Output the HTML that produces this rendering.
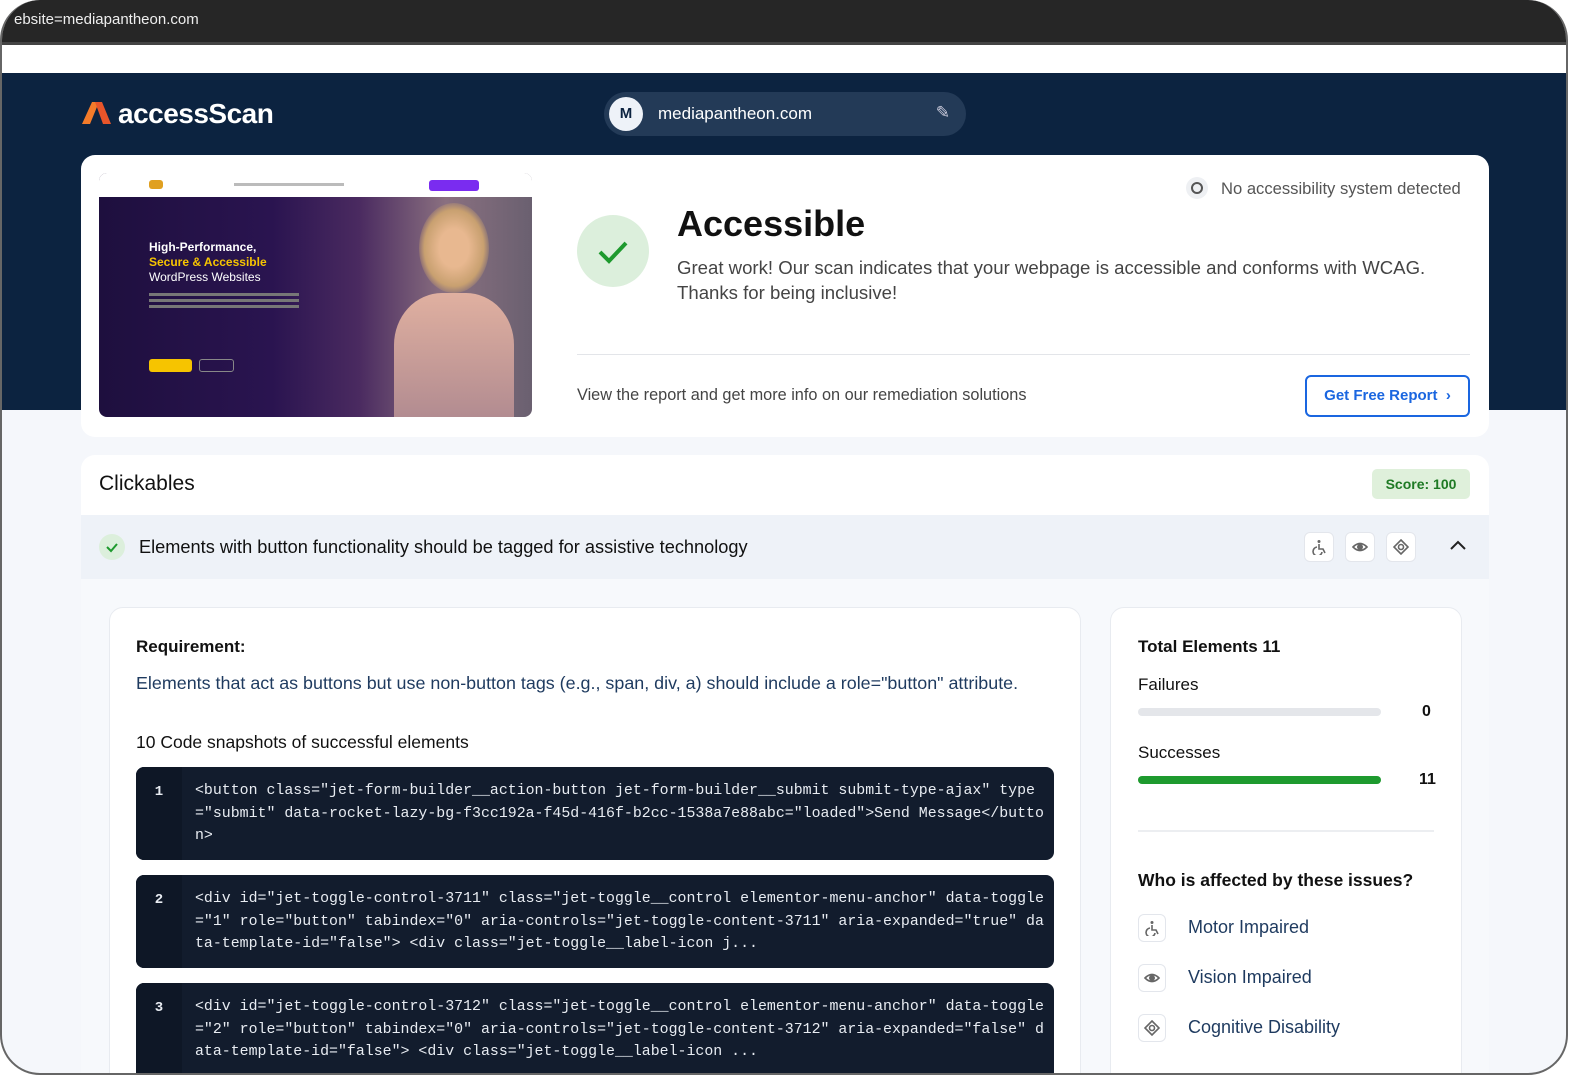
<!DOCTYPE html>
<html><head><meta charset="utf-8"><style>
*{box-sizing:border-box;margin:0;padding:0}
body{width:1576px;height:1080px;background:#fff;font-family:"Liberation Sans",sans-serif;overflow:hidden;position:relative}
.frame{position:absolute;left:0;top:0;width:1568px;height:1075px;border:2px solid #666;border-top:none;border-radius:40px;overflow:hidden;background:#f5f7fb}
.bar{position:absolute;left:0;top:0;width:100%;height:45px;background:#262626;color:#eee;font-size:15px;padding:11px 0 0 12px;border-bottom:3px solid #444}
.white{position:absolute;top:45px;left:0;width:100%;height:28px;background:#fff}
.navy{position:absolute;top:73px;left:0;width:100%;height:337px;background:#0c2340}
.logo{position:absolute;left:80px;top:98px;color:#fff;font-size:28px;font-weight:bold;letter-spacing:-0.5px}
.url{position:absolute;left:602px;top:92px;width:362px;height:44px;border-radius:22px;background:#233a57;color:#fff;font-size:17px}
.url .m{position:absolute;left:5px;top:5px;width:34px;height:34px;border-radius:50%;background:#eef2f8;color:#0c2340;font-weight:bold;text-align:center;line-height:34px;font-size:15px}
.card{position:absolute;background:#fff;border-radius:14px}
.thumb{position:absolute;left:97px;top:173px;width:433px;height:244px;border-radius:8px;overflow:hidden;background:linear-gradient(90deg,#1e0f3e 0%,#2a1450 40%,#4a2a60 60%,#8a7080 80%,#6a6070 100%)}
.h{color:#111}
.code{position:absolute;left:134px;width:918px;height:93px;background:#121c2d;border-radius:8px;color:#e8ecf2;font-family:"Liberation Mono",monospace;font-size:14.9px;line-height:22.5px}
.code .n{position:absolute;left:0;top:0;width:46px;height:100%;background:#0e1726;border-radius:8px 0 0 8px;text-align:center;padding-top:14px;font-weight:bold;font-size:14px}
.code .t{position:absolute;left:59px;top:13px;right:4px;white-space:pre;overflow:hidden}
.ib{position:absolute;width:30px;height:30px;border:1px solid #e3e6ec;border-radius:6px;background:#fff}
.ib svg{position:absolute;left:50%;top:50%;transform:translate(-50%,-50%)}
</style></head><body>
<svg width="0" height="0" style="position:absolute">
<defs>
<g id="wc" fill="none" stroke="#666" stroke-width="1.6"><circle cx="8" cy="2.5" r="1.5" fill="#666" stroke="none"/><path d="M8 5 V10 H12 L14 14"/><path d="M6 8 A4.5 4.5 0 1 0 11 13"/></g>
<g id="eye" fill="none" stroke="#666" stroke-width="1.6"><path d="M1 8 Q8 1 15 8 Q8 15 1 8Z"/><circle cx="8" cy="8" r="2.2" fill="#666"/></g>
<g id="cog" fill="none" stroke="#666" stroke-width="1.6"><path d="M8 1 L15 8 L8 15 L1 8Z"/><circle cx="8" cy="8" r="2.5"/></g>
</defs></svg>
<div class="frame">
<div class="bar">ebsite=mediapantheon.com</div>
<div class="white"></div>
<div class="navy"></div>
<div class="logo"><svg width="30" height="26" viewBox="0 0 30 26" style="vertical-align:-3px;margin-right:6px"><path d="M0 24 L10 2 L17 2 L8 24Z" fill="#f47b2a"/><path d="M13 2 L20 2 L29 24 L21 24Z" fill="#e8552a"/></svg>accessScan</div>
<div class="url"><div class="m">M</div><div style="position:absolute;left:54px;top:12px">mediapantheon.com</div><div style="position:absolute;right:16px;top:11px;color:#ccd">✎</div></div>

<div class="card" style="left:79px;top:155px;width:1408px;height:282px"></div>
<div class="thumb">
<div style="position:absolute;left:0;top:0;width:100%;height:24px;background:#fff"></div>
<div style="position:absolute;left:50px;top:7px;width:14px;height:9px;background:#e0a020;border-radius:3px"></div>
<div style="position:absolute;left:135px;top:10px;width:110px;height:3px;background:#bbb"></div>
<div style="position:absolute;left:330px;top:7px;width:50px;height:11px;background:#7a2cf0;border-radius:3px"></div>
<div style="position:absolute;left:50px;top:67px;color:#fff;font-size:12px;font-weight:bold;line-height:15px">High-Performance,<br><span style="color:#f6c400">Secure &amp; Accessible</span><br><span style="font-weight:normal">WordPress Websites</span></div>
<div style="position:absolute;left:50px;top:120px;width:150px;height:3px;background:#777;box-shadow:0 6px 0 #777,0 12px 0 #777"></div>
<div style="position:absolute;left:50px;top:186px;width:43px;height:13px;background:#f6c400;border-radius:3px"></div>
<div style="position:absolute;left:100px;top:186px;width:35px;height:13px;border:1px solid #888;border-radius:3px"></div>
<div style="position:absolute;left:320px;top:30px;width:70px;height:90px;border-radius:50%;background:radial-gradient(ellipse,#e8b890 30%,#c8a070 60%,transparent 75%)"></div>
<div style="position:absolute;left:295px;top:120px;width:120px;height:130px;border-radius:40% 40% 0 0;background:linear-gradient(#e0b0a0,#b08a90)"></div>
</div>
<div style="position:absolute;left:575px;top:215px;width:72px;height:72px;border-radius:50%;background:#dcefdc"><svg width="72" height="72"><path d="M23 37 L32 46 L49 28" stroke="#1e9a2e" stroke-width="4" fill="none"/></svg></div>
<div class="h" style="position:absolute;left:675px;top:203px;font-size:36px;font-weight:bold">Accessible</div>
<div style="position:absolute;left:675px;top:255px;font-size:18.6px;color:#444;line-height:25px">Great work! Our scan indicates that your webpage is accessible and conforms with WCAG.<br>Thanks for being inclusive!</div>
<div style="position:absolute;left:1184px;top:177px;width:22px;height:22px;border-radius:50%;background:#eef0f3"><div style="margin:5px;width:12px;height:12px;border:2px solid #555;border-radius:50%"></div></div>
<div style="position:absolute;left:1219px;top:179px;font-size:16.6px;color:#555">No accessibility system detected</div>
<div style="position:absolute;left:575px;top:354px;width:893px;height:1px;background:#e3e5e9"></div>
<div style="position:absolute;left:575px;top:386px;font-size:16.3px;color:#444">View the report and get more info on our remediation solutions</div>
<div style="position:absolute;left:1303px;top:375px;width:165px;height:42px;border:2px solid #1a66e0;border-radius:6px;color:#1a66e0;font-weight:bold;font-size:15px;text-align:center;line-height:38px">Get Free Report &nbsp;›</div>

<div class="card" style="left:79px;top:455px;width:1408px;height:640px;background:#f7f9fc"></div>
<div style="position:absolute;left:79px;top:455px;width:1408px;height:60px;background:#fff;border-radius:14px 14px 0 0"></div>
<div class="h" style="position:absolute;left:97px;top:472px;font-size:21px">Clickables</div>
<div style="position:absolute;left:1370px;top:469px;width:98px;height:30px;background:#dff0db;border-radius:5px;color:#1e7a24;font-weight:bold;font-size:14px;text-align:center;line-height:30px">Score: 100</div>
<div style="position:absolute;left:79px;top:515px;width:1408px;height:64px;background:#eef2f8"></div>
<div style="position:absolute;left:97px;top:534px;width:26px;height:26px;border-radius:50%;background:#dcefdc"><svg width="26" height="26"><path d="M8 13 L12 17 L18 10" stroke="#1e9a2e" stroke-width="2" fill="none"/></svg></div>
<div class="h" style="position:absolute;left:137px;top:537px;font-size:18.2px">Elements with button functionality should be tagged for assistive technology</div>
<div class="ib" style="left:1302px;top:532px"><svg width="16" height="16"><use href="#wc"/></svg></div>
<div class="ib" style="left:1343px;top:532px"><svg width="16" height="16"><use href="#eye"/></svg></div>
<div class="ib" style="left:1384px;top:532px"><svg width="16" height="16"><use href="#cog"/></svg></div>
<svg style="position:absolute;left:1447px;top:540px" width="18" height="12"><path d="M2 9 L9 2 L16 9" stroke="#222" stroke-width="2" fill="none"/></svg>

<div class="card" style="left:107px;top:607px;width:972px;height:480px;border:1px solid #e8ebf0"></div>
<div class="h" style="position:absolute;left:134px;top:637px;font-size:17px;font-weight:bold">Requirement:</div>
<div style="position:absolute;left:134px;top:673px;font-size:17.9px;color:#1e3a5f">Elements that act as buttons but use non-button tags (e.g., span, div, a) should include a role="button" attribute.</div>
<div class="h" style="position:absolute;left:134px;top:732px;font-size:17.5px">10 Code snapshots of successful elements</div>
<div class="code" style="top:767px"><div class="n">1</div><div class="t">&lt;button class="jet-form-builder__action-button jet-form-builder__submit submit-type-ajax" type
="submit" data-rocket-lazy-bg-f3cc192a-f45d-416f-b2cc-1538a7e88abc="loaded"&gt;Send Message&lt;/butto
n&gt;</div></div>
<div class="code" style="top:875px"><div class="n">2</div><div class="t">&lt;div id="jet-toggle-control-3711" class="jet-toggle__control elementor-menu-anchor" data-toggle
="1" role="button" tabindex="0" aria-controls="jet-toggle-content-3711" aria-expanded="true" da
ta-template-id="false"&gt; &lt;div class="jet-toggle__label-icon j...</div></div>
<div class="code" style="top:983px;height:100px"><div class="n">3</div><div class="t">&lt;div id="jet-toggle-control-3712" class="jet-toggle__control elementor-menu-anchor" data-toggle
="2" role="button" tabindex="0" aria-controls="jet-toggle-content-3712" aria-expanded="false" d
ata-template-id="false"&gt; &lt;div class="jet-toggle__label-icon ...</div></div>

<div class="card" style="left:1108px;top:607px;width:352px;height:480px;border:1px solid #e8ebf0"></div>
<div class="h" style="position:absolute;left:1136px;top:637px;font-size:17px;font-weight:bold">Total Elements 11</div>
<div class="h" style="position:absolute;left:1136px;top:675px;font-size:17px">Failures</div>
<div style="position:absolute;left:1136px;top:708px;width:243px;height:8px;border-radius:4px;background:#e4e6ea"></div>
<div class="h" style="position:absolute;left:1420px;top:703px;font-size:16px;font-weight:bold">0</div>
<div class="h" style="position:absolute;left:1136px;top:743px;font-size:17px">Successes</div>
<div style="position:absolute;left:1136px;top:776px;width:243px;height:8px;border-radius:4px;background:#1e9a2e"></div>
<div class="h" style="position:absolute;left:1417px;top:771px;font-size:16px;font-weight:bold">11</div>
<div style="position:absolute;left:1136px;top:830px;width:296px;height:2px;background:#eceef1"></div>
<div class="h" style="position:absolute;left:1136px;top:870px;font-size:17.5px;font-weight:bold">Who is affected by these issues?</div>
<div class="ib" style="left:1136px;top:914px;width:28px;height:28px"><svg width="16" height="16"><use href="#wc"/></svg></div>
<div style="position:absolute;left:1186px;top:917px;font-size:18px;color:#1e3a5f">Motor Impaired</div>
<div class="ib" style="left:1136px;top:964px;width:28px;height:28px"><svg width="16" height="16"><use href="#eye"/></svg></div>
<div style="position:absolute;left:1186px;top:967px;font-size:18px;color:#1e3a5f">Vision Impaired</div>
<div class="ib" style="left:1136px;top:1014px;width:28px;height:28px"><svg width="16" height="16"><use href="#cog"/></svg></div>
<div style="position:absolute;left:1186px;top:1017px;font-size:18px;color:#1e3a5f">Cognitive Disability</div>
</div>
</body></html>
